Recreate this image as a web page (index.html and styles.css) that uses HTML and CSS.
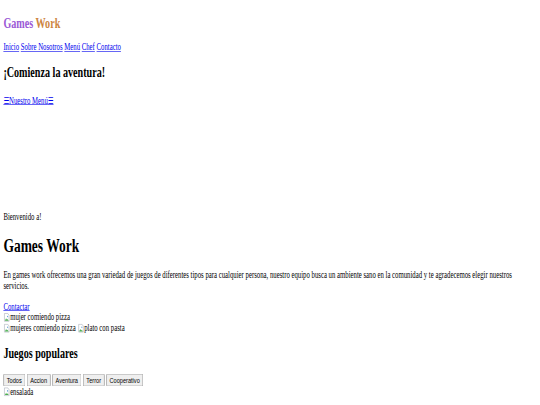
FILE: index.html
```html
<!DOCTYPE html>
<html>
<head>
    <link rel="stylesheet" href="styles.css">
</head>
<body>
    <div class="frame">
    <div class="page">
        <header class="header">
            <div class="logo"><span class="logo-games">Games</span> <span class="logo-work">Work</span></div>
            <nav class="nav">
                <a href="#">Inicio</a>
                <a href="#">Sobre Nosotros</a>
                <a href="#">Menú</a>
                <a href="#">Chef</a>
                <a href="#">Contacto</a>
            </nav>
        </header>

        <section class="hero">
            <h2>¡Comienza la aventura!</h2>
            <a href="#" class="hero-link"><span class="burger">&#9776;</span>Nuestro Menú<span class="burger">&#9776;</span></a>
        </section>

        <section class="about">
            <p>Bienvenido a!</p>
            <h1>Games Work</h1>
            <p>En games work ofrecemos una gran variedad de juegos de diferentes tipos para cualquier persona, nuestro equipo busca un ambiente sano en la comunidad y te agradecemos elegir nuestros servicios.</p>
            <a href="#">Contactar</a>
            <div class="pics">
                <div><span class="broken"><svg viewBox="0 0 16 16" width="16" height="16"><path d="M2.5 1.5h8l3 3v10h-11z" fill="#fff" stroke="#9aa3ad"/><path d="M3.5 13.5l3-4 2 2.5 1.5-1.5 2.5 3z" fill="#4caf50"/><circle cx="10" cy="6.5" r="1.3" fill="#5b9bd5"/></svg>mujer comiendo pizza</span></div>
                <div><span class="broken"><svg viewBox="0 0 16 16" width="16" height="16"><path d="M2.5 1.5h8l3 3v10h-11z" fill="#fff" stroke="#9aa3ad"/><path d="M3.5 13.5l3-4 2 2.5 1.5-1.5 2.5 3z" fill="#4caf50"/><circle cx="10" cy="6.5" r="1.3" fill="#5b9bd5"/></svg>mujeres comiendo pizza</span> <span class="broken"><svg viewBox="0 0 16 16" width="16" height="16"><path d="M2.5 1.5h8l3 3v10h-11z" fill="#fff" stroke="#9aa3ad"/><path d="M3.5 13.5l3-4 2 2.5 1.5-1.5 2.5 3z" fill="#4caf50"/><circle cx="10" cy="6.5" r="1.3" fill="#5b9bd5"/></svg>plato con pasta</span></div>
            </div>
        </section>

        <section class="games">
            <h2>Juegos populares</h2>
            <div class="filters">
                <button>Todos</button>
                <button>Accion</button>
                <button>Aventura</button>
                <button>Terror</button>
                <button>Cooperativo</button>
            </div>
            <div><span class="broken"><svg viewBox="0 0 16 16" width="16" height="16"><path d="M2.5 1.5h8l3 3v10h-11z" fill="#fff" stroke="#9aa3ad"/><path d="M3.5 13.5l3-4 2 2.5 1.5-1.5 2.5 3z" fill="#4caf50"/><circle cx="10" cy="6.5" r="1.3" fill="#5b9bd5"/></svg>ensalada</span></div>
        </section>
    </div>
    </div>
</body>
</html>
```

FILE: styles.css
```css
/* the shot was taken at 1280x675 and squeezed into 540x405 */
html, body {
    margin: 0;
    padding: 0;
    overflow: hidden;
    background: #ffffff;
}

.frame {
    width: 540px;
    height: 405px;
    overflow: hidden;
}

.page {
    width: 1280px;
    height: 675px;
    box-sizing: border-box;
    padding: 0 8px;
    transform: scale(0.421875, 0.6);
    transform-origin: 0 0;
    font-family: "Liberation Serif", serif;
    font-size: 16px;
    color: #000;
}

a {
    color: #0000ee;
}

h1 {
    font-size: 32px;
    margin: 21.44px 0;
}

h2 {
    font-size: 24px;
    margin: 19.92px 0;
}

p {
    margin: 16px 0;
}

/* Header */
.logo {
    font-size: 24px;
    font-weight: bold;
    margin: 15px 0 18px;
}

.logo-games {
    color: #9b59d6;
}

.logo-work {
    color: #cd853f;
}

/* Hero */
.hero {
    padding-bottom: 175px;
}

.hero h2 {
    margin-bottom: 24px;
}

.burger {
    font-family: "DejaVu Sans", sans-serif;
    font-size: 15px;
}

/* About */
.about p:first-child {
    margin-top: 0;
}

.broken svg {
    vertical-align: -3px;
}

/* Games */
.filters button {
    font-family: "Liberation Sans", Arial, sans-serif;
    font-size: 13.333px;
}
```
